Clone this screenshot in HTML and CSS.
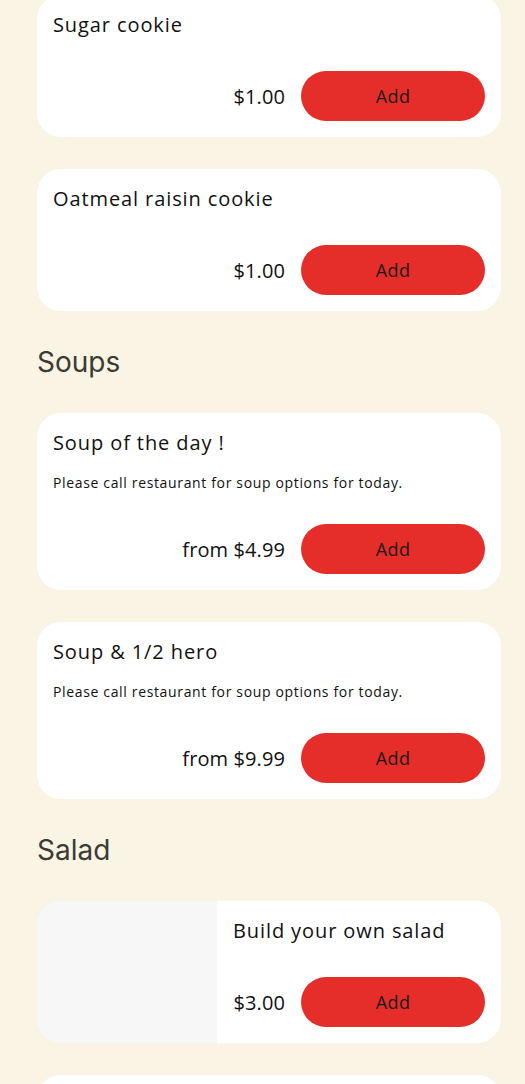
FILE: index.html
```html
<!DOCTYPE html>
<html lang="en">
<head>
<meta charset="utf-8">
<link rel="stylesheet" href="styles.css">
</head>
<body>
<main class="menu">
  <article class="card">
    <div class="card-body">
      <h3 class="item-name">Sugar cookie</h3>
      <div class="item-row">
        <span class="price">$1.00</span>
        <button class="add-btn">Add</button>
      </div>
    </div>
  </article>
  <article class="card">
    <div class="card-body">
      <h3 class="item-name">Oatmeal raisin cookie</h3>
      <div class="item-row">
        <span class="price">$1.00</span>
        <button class="add-btn">Add</button>
      </div>
    </div>
  </article>

  <h2 class="section-title">Soups</h2>
  <article class="card">
    <div class="card-body">
      <h3 class="item-name">Soup of the day !</h3>
      <p class="item-desc">Please call restaurant for soup options for today.</p>
      <div class="item-row">
        <span class="price">from $4.99</span>
        <button class="add-btn">Add</button>
      </div>
    </div>
  </article>
  <article class="card">
    <div class="card-body">
      <h3 class="item-name">Soup &amp; 1/2 hero</h3>
      <p class="item-desc">Please call restaurant for soup options for today.</p>
      <div class="item-row">
        <span class="price">from $9.99</span>
        <button class="add-btn">Add</button>
      </div>
    </div>
  </article>

  <h2 class="section-title">Salad</h2>
  <article class="card card-media">
    <div class="media"></div>
    <div class="card-body">
      <h3 class="item-name">Build your own salad</h3>
      <div class="item-row">
        <span class="price">$3.00</span>
        <button class="add-btn">Add</button>
      </div>
    </div>
  </article>
  <article class="card">
    <div class="card-body">
      <h3 class="item-name">Chef salad</h3>
      <div class="item-row">
        <span class="price">$9.99</span>
        <button class="add-btn">Add</button>
      </div>
    </div>
  </article>
</main>
</body>
</html>
```
FILE: styles.css
```css
html, body {
  margin: 0;
  padding: 0;
  background: #faf4e5;
}
body {
  font-family: "Open Sans", "Liberation Sans", sans-serif;
  color: #111;
}
.menu {
  display: flex;
  flex-direction: column;
  gap: 32px;
  margin: -5px 24px 0 37px;
}
.card {
  background: #fff;
  border-radius: 24px;
  overflow: hidden;
  display: flex;
}
.card-body {
  flex: 1;
  min-width: 0;
  padding: 16px;
  display: flex;
  flex-direction: column;
}
.media {
  width: 180px;
  flex: none;
  background: #f7f7f7;
}
.item-name {
  margin: 0;
  font-size: 20px;
  line-height: 28px;
  font-weight: 400;
  letter-spacing: 0.9px;
}
.item-desc {
  margin: 16px 0 0;
  font-size: 14px;
  line-height: 19px;
  letter-spacing: 0.65px;
}
.item-row {
  margin-top: 32px;
  display: flex;
  justify-content: flex-end;
  align-items: center;
  gap: 16px;
}
.price {
  font-size: 20px;
  letter-spacing: 0.1px;
  white-space: nowrap;
}
.add-btn {
  flex: 0 1 184px;
  height: 50px;
  border: none;
  border-radius: 25px;
  background: #e52d29;
  color: #1a1a1a;
  font-family: inherit;
  font-size: 18px;
  letter-spacing: 0.4px;
  padding: 0;
}
.section-title {
  margin: 0;
  font-family: "Inter", "Liberation Sans", sans-serif;
  font-size: 28px;
  line-height: 38px;
  font-weight: 400;
  color: #3b3a33;
}
```
